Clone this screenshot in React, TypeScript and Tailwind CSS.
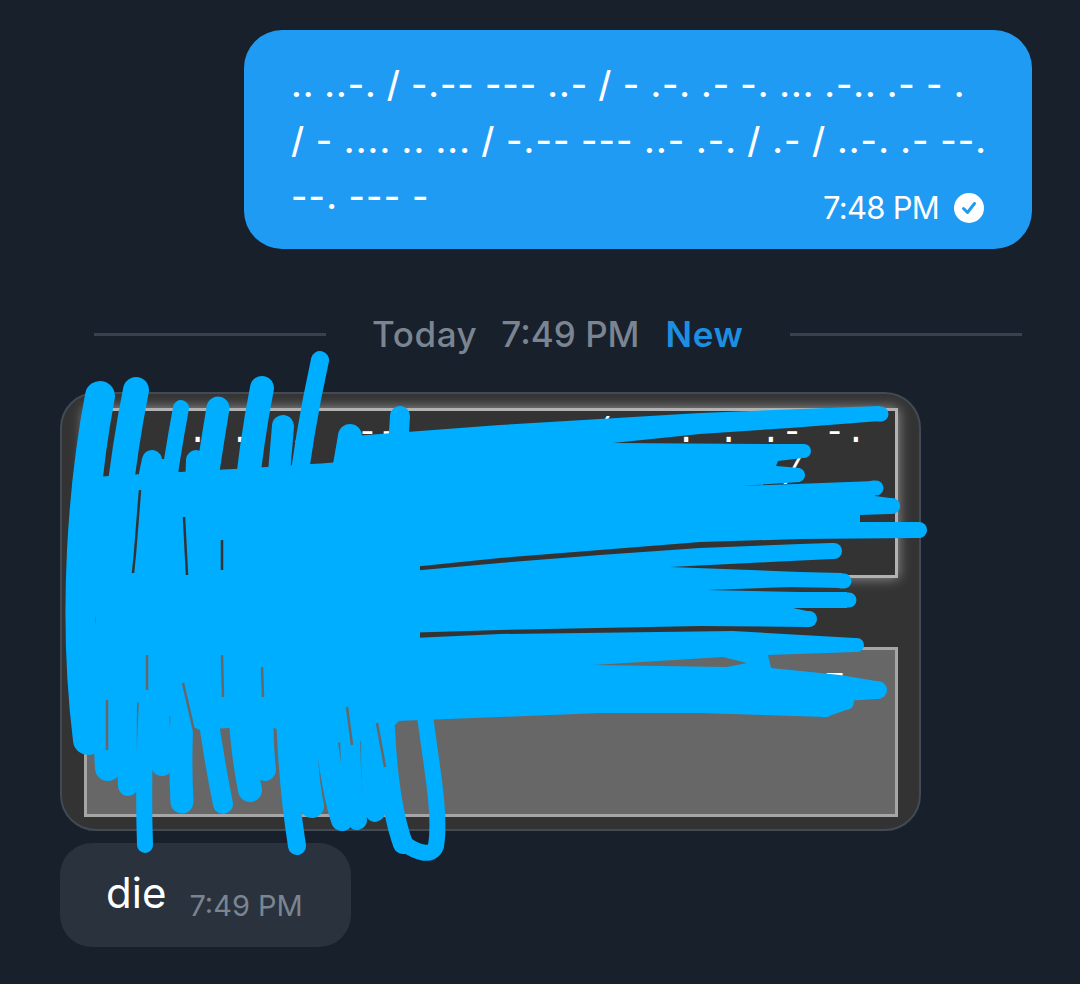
// Chat screenshot with a hand-drawn scribble over the forwarded card
const scribbleStrokes: [string, number][] = [
  // vertical strokes, left to right
  ["M100 396 C 84 480, 72 610, 88 740", 30],
  ["M136 390 C 118 480, 100 640, 108 768", 26],
  ["M152 460 C 130 560, 124 700, 128 786", 20],
  ["M181 408 C 160 520, 140 700, 145 845", 16],
  ["M162 470 C 158 600, 154 700, 162 765", 22],
  ["M218 408 C 196 540, 176 700, 182 802", 23],
  ["M196 460 C 190 600, 206 720, 223 804", 20],
  ["M262 388 C 240 500, 228 680, 250 790", 24],
  ["M283 426 C 272 560, 256 690, 265 770", 22],
  ["M320 360 C 296 470, 268 660, 297 846", 18],
  ["M350 436 C 330 560, 290 700, 312 806", 24],
  ["M302 500 C 318 620, 322 760, 342 820", 22],
  ["M374 460 C 350 620, 344 760, 357 820", 20],
  ["M400 416 C 392 560, 360 720, 375 812", 20],
  ["M390 520 C 380 660, 380 780, 403 844", 20],
  ["M422 690 C 428 750, 442 810, 436 846 C 432 858, 416 852, 405 844", 16],
  ["M80 486 C 160 480, 240 478, 340 470", 16],
  // round ends of the horizontal strokes
  ["M878 414 L881 414", 15],
  ["M801 451 L804 451", 14],
  ["M795 475 L798 475", 14],
  ["M873 488 L876 488", 15],
  ["M889 506 L892 506", 16],
  ["M916 530 L919 530", 16],
  ["M831 551 L834 551", 16],
  ["M841 581 L844 581", 15],
  ["M846 600 L849 600", 15],
  ["M806 619 L809 619", 16],
  ["M854 645 L857 645", 14],
  ["M875 690 L878 690", 18],
  ["M843 702 L846 702", 16],
  ["M823 710 L826 710", 14],
];

// overlapping horizontal strokes form solid areas with thin gaps between them
const scribbleAreas = [
  "M340 437 L500 425 L700 413 L880 406 L880 421 L790 428 L700 434 L613 443 L773 444 L803 444 L803 458 L778 461 L776 466 L800 468 L800 482 L740 486 L875 481 L875 496 L890 498 L890 514 L860 515 L860 522 L918 522 L918 538 L800 539 L700 542 L600 550 L500 558 L412 567 L340 570 Z",
  "M400 572 L500 563 L600 555 L700 548 L800 544 L832 543 L832 559 L770 562 L670 567 L800 572 L842 573 L842 588 L790 587 L707 590 L800 592 L847 592 L847 608 L793 608 L807 611 L807 627 L700 626 L500 630 L400 633 Z",
  "M370 640 L500 634 L733 631 L855 638 L855 652 L768 655 L771 668 L840 675 L876 681 L876 699 L846 701 L846 710 L826 717 L700 713 L600 713 L500 717 L370 722 Z M593 665 L723 657 L747 663 L727 667 Z",
  // left block where the vertical strokes overlap
  "M96 490 L340 465 L420 500 L420 640 L400 720 L380 740 L300 745 L270 725 L200 730 L110 690 L92 600 Z",
];

// thin gaps left between the vertical strokes
const darkGaps = ["M140 490 L135 553 L133 573", "M184 517 L187 575", "M222 540 L222 570"];
const grayGaps = [
  "M107 700 L107 750",
  "M147 655 L147 690",
  "M183 683 L207 787",
  "M222 655 L223 697",
  "M262 667 L263 697",
  "M347 707 L352 745",
  "M377 723 L385 767",
  "M405 723 L413 807",
];

function Scribble() {
  return (
    <svg
      className="absolute left-0 top-0 h-[984px] w-[1080px]"
      viewBox="0 0 1080 984"
      fill="none"
    >
      {scribbleAreas.map((d, i) => (
        <path key={i} d={d} fill="#00aeff" fillRule="evenodd" />
      ))}
      {scribbleStrokes.map(([d, width], i) => (
        <path
          key={i}
          d={d}
          stroke="#00aeff"
          strokeWidth={width}
          strokeLinecap="round"
          strokeLinejoin="round"
        />
      ))}
      {darkGaps.map((d, i) => (
        <path key={i} d={d} stroke="#333333" strokeWidth="2.5" />
      ))}
      {grayGaps.map((d, i) => (
        <path key={i} d={d} stroke="#676767" strokeWidth="2.5" />
      ))}
    </svg>
  );
}

function ReadCheck() {
  return (
    <svg width="30" height="30" viewBox="0 0 30 30">
      <circle cx="15" cy="15" r="15" fill="#ffffff" />
      <path
        d="M9.5 15.5 L13.5 19.5 L20.5 10.5"
        fill="none"
        stroke="#1f9bf3"
        strokeWidth="3"
        strokeLinecap="round"
        strokeLinejoin="round"
      />
    </svg>
  );
}

export default function App() {
  return (
    <div className="relative h-[984px] w-[1080px] overflow-hidden bg-[#17202b] pt-[30px] font-['Inter',sans-serif]">
      {/* Sent message */}
      <div className="ml-[244px] h-[219px] w-[788px] rounded-[38px] bg-[#1f9bf3] pl-[47px] pr-[46px] pt-[27px] text-white">
        <div className="whitespace-nowrap text-[35.5px] font-medium leading-[56px] tracking-[0.9px]">
          .. ..-. / -.-- --- ..- / - .-. .- -. ... .-.. .- - .
        </div>
        <div className="whitespace-nowrap text-[35.5px] font-medium leading-[56px] tracking-[1.1px]">
          / - .... .. ... / -.-- --- ..- .-. / .- / ..-. .- --.
        </div>
        <div className="flex items-start justify-between">
          <span className="text-[35.5px] font-medium leading-[56px] tracking-[1.2px]">--. --- -</span>
          <div className="mt-[19px] flex items-center gap-[15px] pr-[2px]">
            <span className="text-[31px] leading-[40px] tracking-[-0.75px]">7:48 PM</span>
            <ReadCheck />
          </div>
        </div>
      </div>

      {/* Date divider */}
      <div className="mt-[64px] flex h-[42px] items-center pl-[94px] text-[35px] font-medium">
        <div className="h-[3px] w-[232px] bg-[#364250]" />
        <span className="ml-[46px] tracking-[0.6px] text-[#7a8591]">Today</span>
        <span className="ml-[24px] text-[#7a8591]">7:49 PM</span>
        <span className="ml-[26px] font-semibold tracking-[0.6px] text-[#1d8fe3]">New</span>
        <div className="ml-[47px] h-[3px] w-[232px] bg-[#364250]" />
      </div>

      {/* Forwarded card */}
      <div className="ml-[60px] mt-[37px] box-border flex h-[439px] w-[861px] flex-col gap-[69px] rounded-[36px] border-[2px] border-[#414a55] bg-[#333333] pl-[22px] pr-[21px] pt-[14px]">
        <div className="box-border h-[170px] whitespace-pre border-[3px] border-[#b2b2b2] pl-[15px] pt-[1px] font-['Liberation_Mono',monospace] text-[35.4px] leading-[42px] text-white shadow-[0_0_12px_rgba(255,255,255,0.5)]">
          {"    . .  /  -- ---     /   . . .- -.\n                                /"}
        </div>
        <div className="box-border h-[170px] whitespace-pre border-[3px] border-[#a6a6a6] bg-[#676767] pl-[15px] pt-[13px] font-['Liberation_Mono',monospace] text-[35.4px] leading-[48px] text-white">
          {"   A J                           27"}
        </div>
      </div>

      {/* Received message */}
      <div className="ml-[60px] mt-[12px] flex h-[104px] w-[291px] items-start rounded-[32px] bg-[#29323d] pl-[46px]">
        <span className="mt-[25px] text-[42px] leading-[50px] text-white">die</span>
        <span className="ml-[23px] mt-[43px] text-[29px] leading-[40px] text-[#7a8591]">7:49 PM</span>
      </div>

      <Scribble />
    </div>
  );
}
